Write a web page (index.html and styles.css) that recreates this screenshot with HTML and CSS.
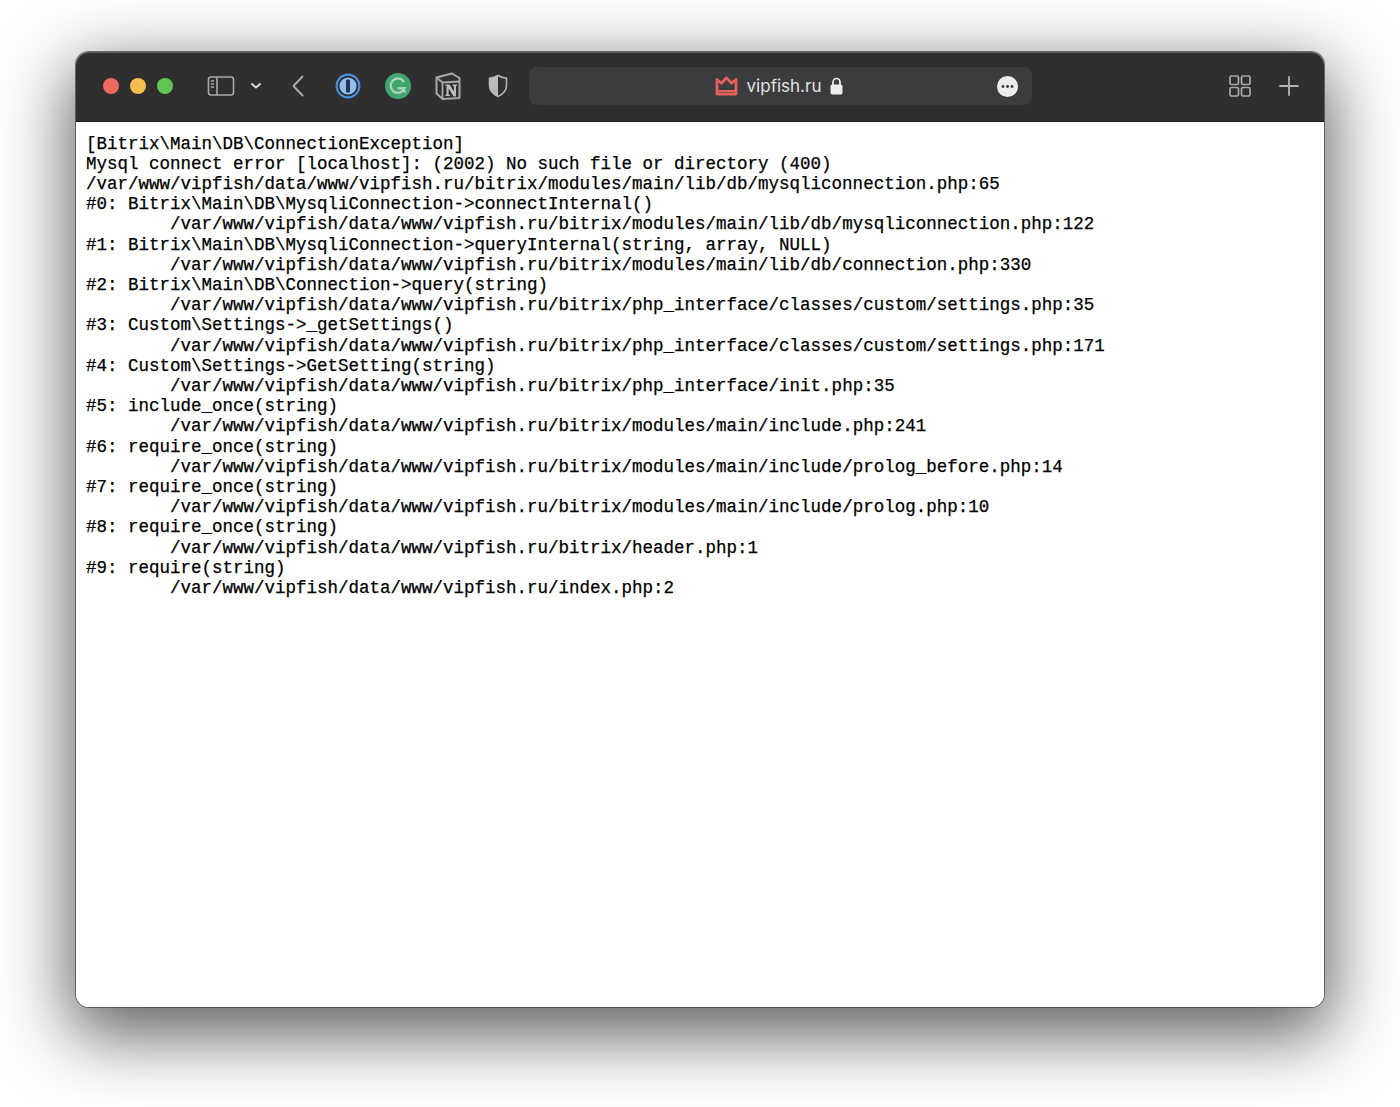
FILE: index.html
```html
<!DOCTYPE html>
<html lang="en">
<head>
<meta charset="utf-8">
<title>vipfish.ru</title>
<link rel="stylesheet" href="styles.css">
</head>
<body>
<div class="window">
  <header class="toolbar">
    <div class="traffic">
      <span class="light red"></span><span class="light yellow"></span><span class="light green"></span>
    </div>
    <svg class="ic sidebar" width="28" height="22" viewBox="0 0 28 22" fill="none" stroke="#a9a9a9" stroke-width="1.6">
      <rect x="1.5" y="2" width="25" height="18" rx="2.5"/><path d="M10 2v18"/>
      <path d="M4 6h3M4 9h3M4 12h3" stroke-width="1.3"/>
    </svg>
    <span class="divider"></span>
    <svg class="ic chev" width="12" height="8" viewBox="0 0 12 8" fill="none" stroke="#d8d8d8" stroke-width="2" stroke-linecap="round" stroke-linejoin="round">
      <path d="M2 2l4 3.6L10 2"/>
    </svg>
    <svg class="ic back" width="14" height="24" viewBox="0 0 14 24" fill="none" stroke="#a9a9a9" stroke-width="2" stroke-linecap="round" stroke-linejoin="round">
      <path d="M11.5 2.5L2.5 12l9 9.500"/>
    </svg>
    <svg class="ic onepass" width="26" height="26" viewBox="0 0 26 26">
      <circle cx="13" cy="13" r="12.4" fill="#4a90de"/>
      <circle cx="13" cy="13" r="10.3" fill="#2b2b2d"/>
      <circle cx="13" cy="13" r="8.6" fill="#8fbdf0"/>
      <rect x="11" y="6.5" width="4" height="13" rx="1" fill="#23344c"/>
    </svg>
    <svg class="ic gram" width="26" height="26" viewBox="0 0 26 26" fill="none">
      <circle cx="13" cy="13" r="13" fill="#3fa66f"/>
      <path d="M18.500 8.200A7.200 7.200 0 1 0 19.600 15.200H13.500" stroke="#a9d2b8" stroke-width="2.400" stroke-linecap="round"/>
      <path d="M17 15.200l3 3.500" stroke="#a9d2b8" stroke-width="2.200" stroke-linecap="round"/>
    </svg>
    <svg class="ic notion" width="26" height="28" viewBox="0 0 26 28" fill="none">
      <path d="M1.500 5.500L17 1.500l7.500 4.500v20l-17 1-6-5.500z" fill="#2f2f31" stroke="#a8a8a8" stroke-width="2" stroke-linejoin="round"/>
      <path d="M1.500 5.500l6 5 17-1M7.500 10.500V27" stroke="#a8a8a8" stroke-width="1.800"/>
      <path d="M10.500 12.500h4l4.400 7v-5.800h-1.400v-1.200h4.500v1.200h-1V24.500h-2.400l-5-8v6.300h1.400V24h-4.500v-1.200h1v-9.100h-1z" fill="#bdbdbd"/>
    </svg>
    <svg class="ic shield" width="20" height="24" viewBox="0 0 20 24">
      <path d="M10 1.500c2.600 1.700 5.400 2.600 8.500 2.800v7.200c0 4.800-3.300 8.400-8.500 11-5.200-2.600-8.500-6.200-8.500-11V4.300C4.600 4.100 7.400 3.200 10 1.500z" fill="none" stroke="#b9b9b9" stroke-width="1.500"/>
      <path d="M10 1.500v21c-5.200-2.600-8.500-6.200-8.500-11V4.300C4.600 4.100 7.400 3.200 10 1.500z" fill="#b9b9b9"/>
    </svg>
    <div class="address">
      <svg class="crown" width="23" height="20" viewBox="0 0 23 20" fill="none" stroke="#e5605a" stroke-width="2.800" stroke-linejoin="round">
        <path d="M2 3.500l4.500 3.800L11.500 1.800l5 5.500L21 3.500V18H2z"/>
        <path d="M2 15h19" stroke-width="2"/>
      </svg>
      <span class="domain">vipfish.ru</span>
      <svg class="lock" width="13" height="18" viewBox="0 0 13 18">
        <path d="M3 8V5a3.500 3.500 0 0 1 7 0v3" fill="none" stroke="#ececec" stroke-width="1.700"/>
        <rect x="0.500" y="7.500" width="12" height="10" rx="1.800" fill="#ececec"/>
      </svg>
      <svg class="more" width="21" height="21" viewBox="0 0 21 21">
        <circle cx="10.500" cy="10.500" r="10.500" fill="#ececec"/>
        <circle cx="6" cy="10.500" r="1.400" fill="#3a3a3c"/><circle cx="10.500" cy="10.500" r="1.400" fill="#3a3a3c"/><circle cx="15" cy="10.500" r="1.400" fill="#3a3a3c"/>
      </svg>
    </div>
    <svg class="ic tabs" width="22" height="22" viewBox="0 0 22 22" fill="none" stroke="#a9a9a9" stroke-width="1.700">
      <rect x="1" y="1" width="8.500" height="8.500" rx="1.500"/><rect x="12.500" y="1" width="8.500" height="8.500" rx="1.500"/>
      <rect x="1" y="12.500" width="8.500" height="8.500" rx="1.500"/><rect x="12.500" y="12.500" width="8.500" height="8.500" rx="1.500"/>
    </svg>
    <svg class="ic plus" width="20" height="20" viewBox="0 0 20 20" stroke="#b4b4b4" stroke-width="1.800" stroke-linecap="round">
      <path d="M10 1v18M1 10h18"/>
    </svg>
  </header>
  <main class="content">
<pre class="trace">[Bitrix\Main\DB\ConnectionException]
Mysql connect error [localhost]: (2002) No such file or directory (400)
/var/www/vipfish/data/www/vipfish.ru/bitrix/modules/main/lib/db/mysqliconnection.php:65
#0: Bitrix\Main\DB\MysqliConnection-&gt;connectInternal()
	/var/www/vipfish/data/www/vipfish.ru/bitrix/modules/main/lib/db/mysqliconnection.php:122
#1: Bitrix\Main\DB\MysqliConnection-&gt;queryInternal(string, array, NULL)
	/var/www/vipfish/data/www/vipfish.ru/bitrix/modules/main/lib/db/connection.php:330
#2: Bitrix\Main\DB\Connection-&gt;query(string)
	/var/www/vipfish/data/www/vipfish.ru/bitrix/php_interface/classes/custom/settings.php:35
#3: Custom\Settings-&gt;_getSettings()
	/var/www/vipfish/data/www/vipfish.ru/bitrix/php_interface/classes/custom/settings.php:171
#4: Custom\Settings-&gt;GetSetting(string)
	/var/www/vipfish/data/www/vipfish.ru/bitrix/php_interface/init.php:35
#5: include_once(string)
	/var/www/vipfish/data/www/vipfish.ru/bitrix/modules/main/include.php:241
#6: require_once(string)
	/var/www/vipfish/data/www/vipfish.ru/bitrix/modules/main/include/prolog_before.php:14
#7: require_once(string)
	/var/www/vipfish/data/www/vipfish.ru/bitrix/modules/main/include/prolog.php:10
#8: require_once(string)
	/var/www/vipfish/data/www/vipfish.ru/bitrix/header.php:1
#9: require(string)
	/var/www/vipfish/data/www/vipfish.ru/index.php:2
</pre>
  </main>
</div>
</body>
</html>
```
FILE: styles.css
```css
* { box-sizing: border-box; }
html, body { margin: 0; height: 100%; }
body {
  background: #fff;
  padding: 52px 76px 100px;
  overflow: hidden;
}
.window {
  width: 1248px;
  height: 955px;
  border-radius: 13px;
  display: flex;
  flex-direction: column;
  background: #fff;
  box-shadow: 0 0 0 1px rgba(70,70,70,.75), 0 22px 70px 6px rgba(0,0,0,.64);
}
.toolbar {
  height: 70px;
  flex: none;
  background: #2f2f30;
  border-radius: 13px 13px 0 0;
  border-top: 1px solid #5c5c5c;
  border-bottom: 1px solid #1c1c1c;
  display: flex;
  align-items: center;
  padding: 0 27px 3px 26.500px;
}
.traffic { display: flex; gap: 11px; }
.light { width: 16px; height: 16px; border-radius: 50%; }
.red { background: #ed6a5e; }
.yellow { background: #f4bf4f; }
.green { background: #61c554; }
.ic { flex: none; display: block; }
.sidebar { margin-left: 34px; }
.divider { width: 1px; height: 22px; background: #444; margin-left: 9px; }
.chev { margin-left: 6px; }
.back { margin-left: 29px; }
.onepass { margin-left: 30px; }
.gram { margin-left: 24px; }
.notion { margin-left: 24px; }
.shield { margin-left: 27px; }
.address {
  width: 503px;
  height: 38px;
  margin-left: 21px;
  background: #3c3c3e;
  border-radius: 8px;
  position: relative;
  display: flex;
  align-items: center;
  justify-content: center;
  gap: 9px;
  padding-right: 2px;
  flex: none;
}
.domain {
  font-family: "Inter", "Liberation Sans", sans-serif;
  font-size: 17px;
  color: #e2e2e2;
}
.crown, .lock { flex: none; }
.more { position: absolute; right: 14px; top: 9px; }
.tabs { margin-left: 197px; }
.plus { margin-left: 28px; }
.content {
  flex: 1;
  background: #fff;
  border-radius: 0 0 13px 13px;
  padding: 11.500px 10px;
  overflow: hidden;
}
.trace {
  margin: 0;
  font-family: "Liberation Mono", "Courier New", monospace;
  font-size: 17.500px;
  line-height: 20.200px;
  color: #000;
  -webkit-text-stroke: 0.25px #000;
  tab-size: 8;
  white-space: pre;
}
```
